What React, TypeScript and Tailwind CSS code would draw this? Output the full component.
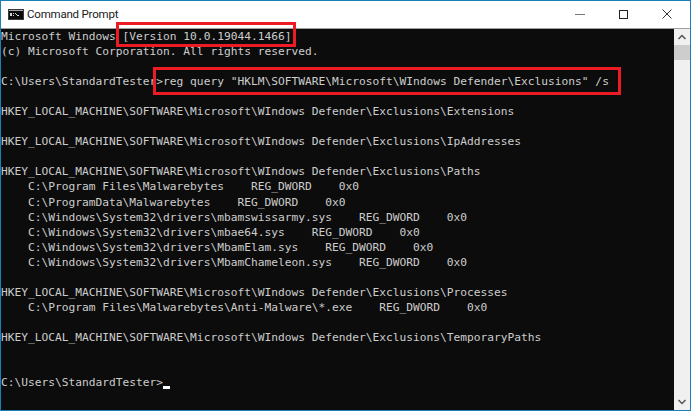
const output = `Microsoft Windows [Version 10.0.19044.1466]
(c) Microsoft Corporation. All rights reserved.

C:\\Users\\StandardTester>reg query "HKLM\\SOFTWARE\\Microsoft\\WIndows Defender\\Exclusions" /s

HKEY_LOCAL_MACHINE\\SOFTWARE\\Microsoft\\WIndows Defender\\Exclusions\\Extensions

HKEY_LOCAL_MACHINE\\SOFTWARE\\Microsoft\\WIndows Defender\\Exclusions\\IpAddresses

HKEY_LOCAL_MACHINE\\SOFTWARE\\Microsoft\\WIndows Defender\\Exclusions\\Paths
    C:\\Program Files\\Malwarebytes    REG_DWORD    0x0
    C:\\ProgramData\\Malwarebytes    REG_DWORD    0x0
    C:\\Windows\\System32\\drivers\\mbamswissarmy.sys    REG_DWORD    0x0
    C:\\Windows\\System32\\drivers\\mbae64.sys    REG_DWORD    0x0
    C:\\Windows\\System32\\drivers\\MbamElam.sys    REG_DWORD    0x0
    C:\\Windows\\System32\\drivers\\MbamChameleon.sys    REG_DWORD    0x0

HKEY_LOCAL_MACHINE\\SOFTWARE\\Microsoft\\WIndows Defender\\Exclusions\\Processes
    C:\\Program Files\\Malwarebytes\\Anti-Malware\\*.exe    REG_DWORD    0x0

HKEY_LOCAL_MACHINE\\SOFTWARE\\Microsoft\\WIndows Defender\\Exclusions\\TemporaryPaths


C:\\Users\\StandardTester>`

const TitleIcon = () => (
  <svg width="16" height="11" viewBox="0 0 16 11">
    <rect width="16" height="11" fill="#3a3a3a" />
    <rect x="1" y="2" width="14" height="8" fill="#0c0c0c" />
    <rect x="1" y="1" width="14" height="1" fill="#a8a8a8" />
    <path d="M2 4h2v3H2zM5 4h1v1H5zM5 6h1v1H5zM7 4h1v1H7zM8 5h1v1H8zM9 6h2v1H9z" fill="#d8d8d8" />
  </svg>
)

const App = () => {
  return (
    <div className="relative flex h-[411px] w-[691px] flex-col overflow-hidden border border-[#1b7fb8] bg-white font-['Roboto',sans-serif]">
      <div className="flex h-[28px] shrink-0 items-center border-b border-[#a0a0a0] bg-white pl-[7px]">
        <TitleIcon />
        <span className="ml-[3px] mt-[1px] text-[11.5px] tracking-[-0.2px] text-[#1a1a1a]">Command Prompt</span>
        <div className="ml-auto flex items-center">
          <svg width="46" height="27" viewBox="0 0 46 27">
            <path d="M23 13.500h10" stroke="#777" strokeWidth="1" />
          </svg>
          <svg width="46" height="27" viewBox="0 0 46 27">
            <rect x="21.500" y="9.500" width="8" height="8" fill="none" stroke="#222" />
          </svg>
          <svg width="46" height="27" viewBox="0 0 46 27">
            <path d="M18.500 8.500l9 9M27.500 8.500l-9 9" stroke="#333" />
          </svg>
        </div>
      </div>
      <div className="flex min-h-0 flex-1">
        <div className="relative flex-1 overflow-hidden bg-[#0c0c0c]">
          <pre className="font-['DejaVu_Sans_Mono',monospace] text-[11.23px] leading-[15.04px] text-[#cccccc]">
            {output}
            <span className="inline-block h-[3px] w-[7px] bg-white align-[-3px]" />
          </pre>
        </div>
        <div className="flex w-[16px] shrink-0 flex-col items-center justify-between bg-[#f0f0f0]">
          <div className="flex w-full flex-col">
            <svg width="16" height="16" viewBox="0 0 16 16">
              <path d="M4.500 10l3.500-3.500 3.500 3.500" fill="none" stroke="#555" strokeWidth="1.500" />
            </svg>
            <div className="h-[15px] w-full bg-[#cdcdcd]" />
          </div>
          <svg width="16" height="17" viewBox="0 0 16 17">
            <path d="M4.500 7l3.500 3.500L11.500 7" fill="none" stroke="#555" strokeWidth="1.500" />
          </svg>
        </div>
      </div>
      {/* red annotation boxes */}
      <div className="absolute left-[115px] top-[21px] h-[25px] w-[180px] border-[3px] border-[#ed1c24]" />
      <div className="absolute left-[152px] top-[66px] h-[28px] w-[468px] border-[3px] border-[#ed1c24]" />
    </div>
  )
}

export default App
